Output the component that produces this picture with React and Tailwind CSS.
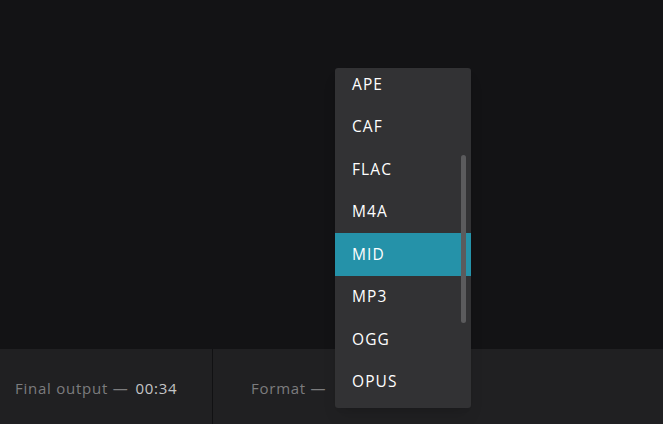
import React from "react";

const formats = ["APE", "CAF", "FLAC", "M4A", "MID", "MP3", "OGG", "OPUS"];

export default function App() {
  return (
    <div
      className="w-[663px] h-[424px] bg-[#131315] flex flex-col relative overflow-hidden"
      style={{ fontFamily: "'Open Sans', 'DejaVu Sans', sans-serif" }}
    >
      {/* Workspace area */}
      <div className="h-[349px] bg-[#131315]" />

      {/* Bottom bar */}
      <div className="flex-1 bg-[#202022] flex items-center">
        <div className="w-[213px] h-full flex items-center pl-[15px] pt-[3px] border-r border-[#111113] text-[15px] tracking-[0.05em]">
          <span className="text-[#7c7c7e]">Final output —</span>
          <span className="text-[#c4c4c6] ml-[7px]">00:34</span>
        </div>
        <div className="flex items-center pl-[38px] pt-[3px] text-[15px] tracking-[0.05em] text-[#7c7c7e]">
          Format —
        </div>
      </div>

      {/* Dropdown menu */}
      <div className="absolute left-[335px] top-[68px] w-[136px] h-[340px] bg-[#323234] rounded-[3px] overflow-hidden shadow-lg">
        <div className="-mt-[5px]">
          {formats.map((f) => (
            <div
              key={f}
              className={
                "h-[42.5px] flex items-center pl-[17px] text-[15.5px] font-medium tracking-[0.07em] text-white " +
                (f === "MID" ? "bg-[#2592a9]" : "")
              }
            >
              {f}
            </div>
          ))}
        </div>
        <div className="absolute right-[5px] top-[87px] w-[5px] h-[168px] rounded-full bg-[#5b5b5d]" />
      </div>
    </div>
  );
}
